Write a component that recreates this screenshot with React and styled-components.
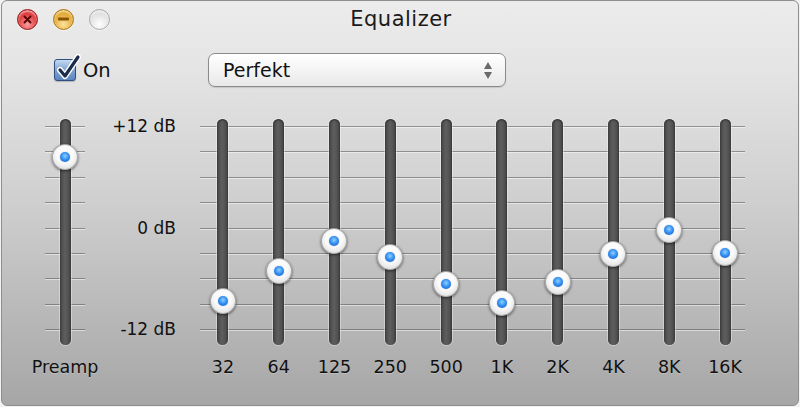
import React from 'react'
import styled, { createGlobalStyle } from 'styled-components'

const GlobalStyle = createGlobalStyle`
    html, body {
        margin: 0;
        padding: 0;
        background: #f2f2f2;
    }
    body {
        font-family: "DejaVu Sans", "Liberation Sans", sans-serif;
        color: #111;
    }
`

// nine scale lines, snapped to whole pixels so none of them blurs
const gridLines = (() => {
    const stops = []
    for (let k = 0; k < 9; k++) {
        const y = Math.round(k * 25.375)
        stops.push(`transparent ${y}px`, `rgba(70, 70, 70, 0.5) ${y}px`, `rgba(70, 70, 70, 0.5) ${y + 1}px`,
            `rgba(255, 255, 255, 0.5) ${y + 1}px`, `rgba(255, 255, 255, 0.5) ${y + 2}px`, `transparent ${y + 2}px`)
    }
    return `linear-gradient(to bottom, ${stops.join(', ')})`
})()

const Window = styled.div`
    box-sizing: border-box;
    width: 798px;
    height: 406px;
    margin-left: 1px;
    border: 1px solid #8e8e8e;
    border-radius: 6px;
    background: linear-gradient(to bottom, #ececec 0px, #e4e4e4 70px, #cfcfcf 200px, #a6a6a6 100%);
    display: flex;
    flex-direction: column;
    overflow: hidden;
`

const TitleBar = styled.div`
    height: 36px;
    display: grid;
    grid-template-columns: 1fr auto 1fr;
    align-items: center;
`

const Lights = styled.div`
    display: flex;
    gap: 15px;
    padding-left: 15px;
`

const lightColors = {
    close: ['#f7a0a0', '#d82828', '#941414'],
    minimize: ['#fbe3a0', '#e0a020', '#a8740e'],
    zoom: ['#ffffff', '#dcdcdc', '#a8a8a8'],
}

const Light = styled.div`
    width: 21px;
    height: 21px;
    box-sizing: border-box;
    border-radius: 50%;
    border: 1px solid ${p => lightColors[p.$kind][2]};
    background: radial-gradient(circle at 50% 75%, ${p => lightColors[p.$kind][0]} 0%, ${p => lightColors[p.$kind][1]} 70%);
    box-shadow: inset 0 2px 2px rgba(255, 255, 255, 0.6), 0 1px 0 rgba(255, 255, 255, 0.7);
    display: flex;
    align-items: center;
    justify-content: center;
`

const Title = styled.div`
    font-size: 21px;
    letter-spacing: 0.5px;
    color: #1a1a1a;
    padding-left: 2px;
`

const TopRow = styled.div`
    display: flex;
    align-items: center;
    height: 34px;
    margin-top: 16px;
    padding-left: 52px;
`

const CheckLabel = styled.label`
    display: flex;
    align-items: center;
    gap: 7px;
    font-size: 19.5px;
    width: 154px;
`

const CheckBox = styled.div`
    position: relative;
    width: 22px;
    height: 22px;
    box-sizing: border-box;
    border: 1px solid #2f4f80;
    border-radius: 3px;
    background: linear-gradient(to bottom, #c6daf2 0%, #7fa3d2 50%, #5d86c0 100%);
    box-shadow: 0 1px 1px rgba(0, 0, 0, 0.2);
`

const CheckMark = styled.svg`
    position: absolute;
    left: 2px;
    top: -4px;
    overflow: visible;
`

const Select = styled.div`
    box-sizing: border-box;
    width: 298px;
    height: 34px;
    border: 1px solid #8a8a8a;
    border-radius: 7px;
    background: linear-gradient(to bottom, #ffffff 0%, #f4f4f4 50%, #e8e8e8 100%);
    box-shadow: 0 1px 1px rgba(0, 0, 0, 0.12);
    display: flex;
    align-items: center;
    justify-content: space-between;
    padding: 0 13px 0 14px;
    font-size: 19px;
`

const Arrows = styled.div`
    display: flex;
    flex-direction: column;
    gap: 3px;
`

const Arrow = styled.div`
    width: 0;
    height: 0;
    border-left: 4.5px solid transparent;
    border-right: 4.5px solid transparent;
    ${p => p.$up ? 'border-bottom: 7px solid #6a6a6a;' : 'border-top: 7px solid #6a6a6a;'}
`

const EqArea = styled.div`
    display: flex;
    align-items: flex-start;
    margin-top: 32px;
    padding-left: 28px;
`

const PreampColumn = styled.div`
    width: 70px;
    display: flex;
    flex-direction: column;
    align-items: center;
`

const PreampTicks = styled.div`
    width: 40px;
    height: 226px;
    display: flex;
    justify-content: center;
    background: ${gridLines};
    background-size: 40px 205px;
    background-position: 0 7px;
    background-repeat: no-repeat;
`

const Scale = styled.div`
    width: 76px;
    height: 223px;
    margin-top: -3px;
    display: flex;
    flex-direction: column;
    justify-content: space-between;
    align-items: flex-end;
    font-size: 17px;
    line-height: 20px;
`

const Bands = styled.div`
    margin-left: 19px;
    display: grid;
    grid-template-columns: repeat(10, 55.8px);
    background: ${gridLines};
    background-size: 545px 205px;
    background-position: 5px 7px;
    background-repeat: no-repeat;
`

const Band = styled.div`
    display: flex;
    flex-direction: column;
    align-items: center;
`

const Track = styled.div`
    position: relative;
    width: 11px;
    height: 226px;
    border-radius: 6px;
    background: linear-gradient(to right, #474747 0%, #5e5e5e 45%, #545454 70%, #444 100%);
    box-shadow: 0 0 0 1px rgba(255, 255, 255, 0.35), inset 0 1px 2px rgba(0, 0, 0, 0.5);
`

const Knob = styled.div`
    position: absolute;
    left: 50%;
    width: 26px;
    height: 26px;
    margin: -13px 0 0 -13px;
    box-sizing: border-box;
    border-radius: 50%;
    border: 1px solid rgba(120, 120, 120, 0.6);
    background: radial-gradient(circle at 50% 40%, #ffffff 0%, #fafafa 45%, #d2d2d2 100%);
    box-shadow: 0 1px 3px rgba(0, 0, 0, 0.6);
    display: flex;
    align-items: center;
    justify-content: center;
`

const Dot = styled.div`
    width: 10px;
    height: 10px;
    border-radius: 50%;
    background: radial-gradient(circle at 50% 40%, #8fd0ff 0%, #2f8cf0 50%, #1558c8 100%);
    box-shadow: 0 0 1px rgba(0, 40, 120, 0.6);
`

const Label = styled.div`
    margin-top: 12px;
    font-size: 17.5px;
    line-height: 20px;
    text-shadow: 0 1px 0 rgba(255, 255, 255, 0.25);
`

const bands = [
    { name: '32', db: -8.7 },
    { name: '64', db: -5.1 },
    { name: '125', db: -1.6 },
    { name: '250', db: -3.5 },
    { name: '500', db: -6.7 },
    { name: '1K', db: -8.9 },
    { name: '2K', db: -6.5 },
    { name: '4K', db: -3.1 },
    { name: '8K', db: -0.3 },
    { name: '16K', db: -3.0 },
]

const knobTop = db => 7 + ((12 - db) / 24) * 203

const Slider = ({ db }) => (
    <Track>
        <Knob style={{ top: knobTop(db) }}>
            <Dot />
        </Knob>
    </Track>
)

const TrafficLight = ({ kind }) => (
    <Light $kind={kind}>
        {kind === 'close' && (
            <svg width="9" height="9" viewBox="0 0 9 9">
                <path d="M1.5 1.5 L7.5 7.5 M7.5 1.5 L1.5 7.5" stroke="#5a0606" strokeWidth="2" strokeLinecap="round" />
            </svg>
        )}
        {kind === 'minimize' && (
            <svg width="11" height="4" viewBox="0 0 11 4">
                <rect x="0" y="0.5" width="11" height="3" rx="1" fill="#8a5300" />
            </svg>
        )}
    </Light>
)

const App = () => {
    return (
        <>
            <GlobalStyle />
            <Window>
                <TitleBar>
                    <Lights>
                        <TrafficLight kind="close" />
                        <TrafficLight kind="minimize" />
                        <TrafficLight kind="zoom" />
                    </Lights>
                    <Title>Equalizer</Title>
                    <div />
                </TitleBar>
                <TopRow>
                    <CheckLabel>
                        <CheckBox>
                            <CheckMark width="22" height="24" viewBox="0 0 22 24">
                                <path d="M3 14 L8 20 L21 1" fill="none" stroke="#fff" strokeWidth="6" strokeLinecap="round" strokeLinejoin="round" />
                                <path d="M3 14 L8 20 L21 1" fill="none" stroke="#1b2b4c" strokeWidth="3.2" strokeLinecap="round" strokeLinejoin="round" />
                            </CheckMark>
                        </CheckBox>
                        On
                    </CheckLabel>
                    <Select>
                        Perfekt
                        <Arrows>
                            <Arrow $up />
                            <Arrow />
                        </Arrows>
                    </Select>
                </TopRow>
                <EqArea>
                    <PreampColumn>
                        <PreampTicks>
                            <Slider db={8.3} />
                        </PreampTicks>
                        <Label>Preamp</Label>
                    </PreampColumn>
                    <Scale>
                        <div>+12 dB</div>
                        <div>0 dB</div>
                        <div>-12 dB</div>
                    </Scale>
                    <Bands>
                        {bands.map(b => (
                            <Band key={b.name}>
                                <Slider db={b.db} />
                                <Label>{b.name}</Label>
                            </Band>
                        ))}
                    </Bands>
                </EqArea>
            </Window>
        </>
    )
}

export default App
